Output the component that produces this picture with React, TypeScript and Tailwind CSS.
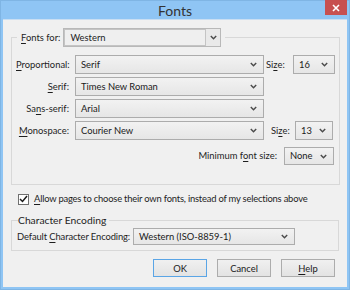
import React from "react";

const font = { fontFamily: 'Lato, "Noto Sans", sans-serif' };

function U({ children }: { children: React.ReactNode }) {
  return <span className="underline underline-offset-[2px] decoration-[1px]">{children}</span>;
}

function Chevron() {
  return (
    <svg width="7" height="5" viewBox="0 0 7 5" className="shrink-0">
      <path d="M0.8 1 L3.5 3.8 L6.2 1" fill="none" stroke="#4a4a4a" strokeWidth="1.4" />
    </svg>
  );
}

function Combo({ text, w, h = 19 }: { text: string; w: string; h?: number }) {
  return (
    <div
      className={`${w} flex items-center justify-between border border-[#acacac] bg-gradient-to-b from-[#f2f2f2] to-[#e6e6e6] pl-[5px] pr-[6px] text-[#1a1a1a] shrink-0`}
      style={{ height: h }}
    >
      <span className="whitespace-nowrap">{text}</span>
      <Chevron />
    </div>
  );
}

function Btn({ children, def }: { children: React.ReactNode; def?: boolean }) {
  return (
    <div
      className={`w-[54px] h-[18px] flex items-center justify-center border bg-gradient-to-b from-[#f0f0f0] to-[#e3e3e3] text-[#1a1a1a] ${
        def ? "border-[#5aa5e6]" : "border-[#acacac]"
      }`}
    >
      {children}
    </div>
  );
}

export default function App() {
  return (
    <div
      className="w-[350px] h-[290px] bg-[#8fc5f4] border border-[#7fb5e4] flex flex-col text-[9.4px] leading-none text-[#1e1e1e]"
      style={font}
    >
      <div className="relative h-[18px] shrink-0 flex items-center justify-center">
        <span className="text-[14px] text-[#333333] mt-[1px]">Fonts</span>
        <div className="absolute right-[2px] top-[-1px] w-[22px] h-[15px] bg-[#c75050] flex items-center justify-center">
          <svg width="8" height="8" viewBox="0 0 8 8">
            <path d="M1 1 L7 7 M7 1 L1 7" stroke="white" strokeWidth="1.6" />
          </svg>
        </div>
      </div>
      <div className="flex-1 mx-[2px] mb-[2px] bg-[#f0f0f0] border-t border-[#c9def2] flex flex-col pt-[8px]">
        <fieldset className="mx-[8px] border border-[#d8d8d8] pl-[4px] pr-[4px] pb-[17px] h-[157px]">
          <legend className="ml-[1px] px-[4px] flex items-center gap-[3px]">
            <span>
              <U>F</U>onts for:
            </span>
            <div className="w-[158px] h-[19px] border border-[#b8b8b8] bg-[#e9e9e9] flex items-center">
              <div className="w-[142px] h-[17px] border border-[#c4c4c4] bg-[#efefef] flex items-center pl-[5px]">
                Western
              </div>
              <div className="flex-1 flex items-center justify-center">
                <Chevron />
              </div>
            </div>
          </legend>
          <div className="flex flex-col gap-[3px] mt-[8px]">
            <div className="flex items-center">
              <div className="w-[53px] text-right whitespace-nowrap">
                <U>P</U>roportional:
              </div>
              <div className="w-[6px]" />
              <Combo text="Serif" w="w-[189px]" />
              <div className="w-[2px]" />
              <span className="w-[27px]">
                Si<U>z</U>e:
              </span>
              <Combo text="16" w="w-[42px]" />
            </div>
            <div className="flex items-center">
              <div className="w-[53px] text-right">
                <U>S</U>erif:
              </div>
              <div className="w-[6px]" />
              <Combo text="Times New Roman" w="w-[189px]" />
            </div>
            <div className="flex items-center">
              <div className="w-[53px] text-right whitespace-nowrap">
                Sa<U>n</U>s-serif:
              </div>
              <div className="w-[6px]" />
              <Combo text="Arial" w="w-[189px]" />
            </div>
            <div className="flex items-center">
              <div className="w-[53px] text-right">
                <U>M</U>onospace:
              </div>
              <div className="w-[6px]" />
              <Combo text="Courier New" w="w-[189px]" />
              <div className="w-[7px]" />
              <span className="w-[24px]">
                Si<U>z</U>e:
              </span>
              <Combo text="13" w="w-[38px]" />
            </div>
            <div className="flex items-center justify-end mt-[4px] pr-[1px]">
              <span className="mr-[7px]">
                Minimum f<U>o</U>nt size:
              </span>
              <Combo text="None" w="w-[50px]" h={18} />
            </div>
          </div>
        </fieldset>
        <div className="flex items-center gap-[5px] ml-[15px] mt-[8px] h-[12px]">
          <div className="w-[11px] h-[11px] border border-[#707070] bg-white flex items-center justify-center">
            <svg width="9" height="8" viewBox="0 0 9 8">
              <path d="M1 4 L3.5 6.5 L8 1" fill="none" stroke="#1a1a1a" strokeWidth="1.5" />
            </svg>
          </div>
          <span className="whitespace-nowrap tracking-[-0.2px]">
            <U>A</U>llow pages to choose their own fonts, instead of my selections above
          </span>
        </div>
        <fieldset className="mx-[8px] mt-[10px] border border-[#d8d8d8] pl-[5px] pb-[5px]">
          <legend className="ml-[1px] pr-[3px] text-[10.3px]">Character Encoding</legend>
          <div className="flex items-center gap-[6px] mt-[3px]">
            <span className="w-[110px] whitespace-nowrap tracking-[-0.1px]">
              Default <U>C</U>haracter Encoding:
            </span>
            <Combo text="Western (ISO-8859-1)" w="w-[162px]" h={17} />
          </div>
        </fieldset>
        <div className="flex justify-end gap-[10px] mr-[12px] mt-[8px]">
          <Btn def>OK</Btn>
          <Btn>Cancel</Btn>
          <Btn>
            <span>
              <U>H</U>elp
            </span>
          </Btn>
        </div>
      </div>
    </div>
  );
}
